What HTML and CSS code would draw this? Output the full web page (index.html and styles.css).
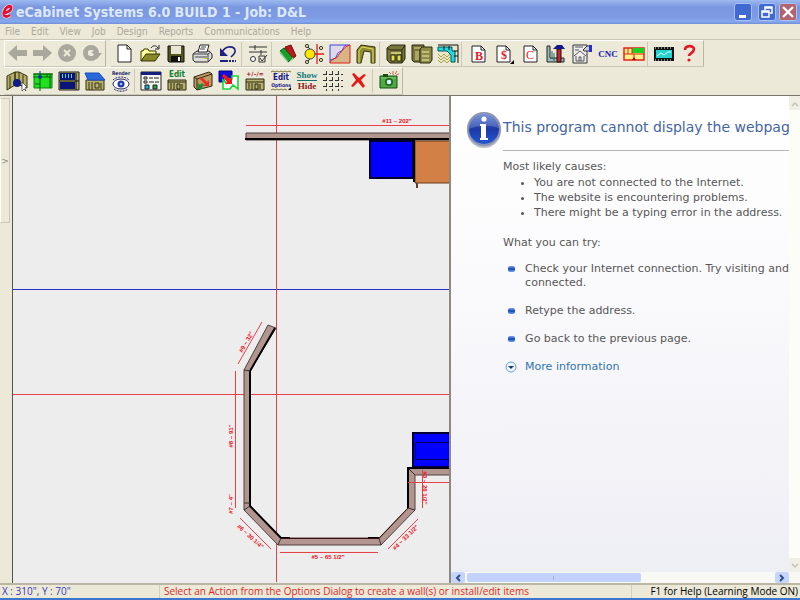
FILE: index.html
```
<!DOCTYPE html>
<html lang="en">
<head>
    <meta charset="utf-8">
    <title>eCabinet Systems 6.0 BUILD 1 - Job: D&amp;L</title>
    <link rel="stylesheet" href="styles.css">
</head>
<body>
<header class="titlebar">
    <svg class="logo" width="16" height="18" viewBox="0 0 16 18"><path d="M3 10C8 10 12 7 11 4C10 2 5 4 4 9C3 13 6 15 10 12" fill="none" stroke="#f4e4f0" stroke-width="4"/><path d="M3 10C8 10 12 7 11 4C10 2 5 4 4 9C3 13 6 15 10 12" fill="none" stroke="#e01030" stroke-width="2.800"/></svg>
    <h1 class="title">eCabinet Systems 6.0 BUILD 1 - Job: D&amp;L</h1>
    <div class="window-buttons">
        <button class="win" aria-label="Minimize"><svg width="16" height="16"><path d="M4 11h7v3H4z" fill="#fff"/></svg></button>
        <button class="win" aria-label="Restore"><svg width="16" height="16"><path d="M6 6V3h7v6h-2M6 4h7M3 7h7v6H3zM3 8h7" fill="none" stroke="#fff" stroke-width="1.500"/></svg></button>
        <button class="win close" aria-label="Close"><svg width="16" height="16"><path d="M3 3l10 10M13 3L3 13" stroke="#fff" stroke-width="2.400"/></svg></button>
    </div>
</header>

<nav class="menu">
    <button>File</button>
    <button>Edit</button>
    <button>View</button>
    <button>Job</button>
    <button>Design</button>
    <button>Reports</button>
    <button>Communications</button>
    <button>Help</button>
</nav>

<div class="toolbar">
    <div class="band nav-band">
        <button class="tool" aria-label="Back"><svg viewBox="0 0 22 22"><path d="M1 10L10 2v5h10v6H10v5z" fill="#aaa89c"/></svg></button>
        <button class="tool" aria-label="Forward"><svg viewBox="0 0 22 22"><path d="M20 10L11 2v5H1v6h10v5z" fill="#aaa89c"/></svg></button>
        <button class="tool" aria-label="Stop"><svg viewBox="0 0 22 22"><circle cx="10" cy="10" r="9" fill="#aaa89c"/><path d="M7 7l6 6M13 7l-6 6" stroke="#eeeadb" stroke-width="2"/></svg></button>
        <button class="tool" aria-label="Refresh"><svg viewBox="0 0 22 22"><circle cx="9" cy="10" r="5.500" fill="none" stroke="#aaa89c" stroke-width="5"/><path d="M10 10h10l-5 6z" fill="#aaa89c"/><circle cx="9" cy="10" r="3" fill="#eeeadb"/><path d="M9 9l4-1v4z" fill="#aaa89c"/></svg></button>
    </div>
    <div class="band">
        <button class="tool" aria-label="New"><svg viewBox="0 0 22 22"><path d="M5 2h9l4 4v13H5z" fill="#fff" stroke="#222"/><path d="M14 2v4h4" fill="none" stroke="#222"/></svg></button>
        <button class="tool" aria-label="Open"><svg viewBox="0 0 22 22"><path d="M2 18V8h2l1-2h4l1 2h7v3" fill="#ffff9c" stroke="#333300"/><path d="M2 18l5-7h14l-5 7z" fill="#88882a" stroke="#333300"/><path d="M12 5c2-3 5-3 7 0M20 2v4h-4" fill="none" stroke="#222"/></svg></button>
        <button class="tool" aria-label="Save"><svg viewBox="0 0 22 22"><path d="M3 3h16v16H4l-1-1z" fill="#55551c" stroke="#111"/><path d="M6 3h10v8H6z" fill="#e9e6d8"/><path d="M6 13h10v6H6z" fill="#111"/><path d="M13 14h2v4h-2z" fill="#fff"/></svg></button>
        <button class="tool" aria-label="Print"><svg viewBox="0 0 22 22"><path d="M2 11l4-3h12l3 3v4l-4 4H4l-2-2z" fill="#ddd" stroke="#222"/><path d="M7 9l2-7h9l-2 7z" fill="#fff" stroke="#222"/><path d="M10 4h5M9 6h5M2 11h15l3-2M17 11v7M4 14h12" fill="none" stroke="#444"/><path d="M13 15h3v1h-3z" fill="#dd0"/></svg></button>
        <button class="tool" aria-label="Undo"><svg viewBox="0 0 22 22"><path d="M5 9c4-7 12-6 13-2c1 3-2 5-4 7" fill="none" stroke="#202080" stroke-width="1.600"/><path d="M3 5v8h8z" fill="#202080"/><path d="M3 18h8" stroke="#202080" stroke-width="2"/><path d="M12 18h7" stroke="#202080" stroke-width="2" stroke-dasharray="2 1"/></svg></button>
        <span class="sep"></span>
        <button class="tool" aria-label="Settings"><svg viewBox="0 0 22 22"><path d="M2 4h18M2 9h18M8 2v5M14 7v5" stroke="#333" fill="none"/><circle cx="6" cy="16" r="2.500" fill="#fff" stroke="#333"/><path d="M12 13h6v6h-6zM13 15l2 3 5-6" fill="none" stroke="#333"/></svg></button>
        <span class="sep"></span>
        <button class="tool" aria-label="Materials"><svg viewBox="0 0 22 22"><path d="M8 4l6-2 5 11-5 4z" fill="#c01818" stroke="#611"/><path d="M3 8l4-3 9 10-5 4z" fill="#18a028" stroke="#052"/><path d="M3 8v3l8 9v-2zM11 20l5-4v-2z" fill="#8fd08f"/></svg></button>
        <button class="tool" aria-label="Hardware"><svg viewBox="0 0 22 22"><path d="M3 11h18M14 1v20" stroke="#e02020" stroke-width="1.300"/><circle cx="7" cy="11" r="5" fill="#ffe600" stroke="#444"/><g fill="#eee8a0" stroke="#333"><circle cx="4" cy="3" r="1.600"/><circle cx="4" cy="19" r="1.600"/><circle cx="18" cy="5" r="1.600"/><circle cx="18" cy="17" r="1.600"/></g><path d="M5 4l2 2M5 18l2-2" stroke="#333"/></svg></button>
        <button class="tool" aria-label="Profiles"><svg viewBox="0 0 22 22"><path d="M1 2h20v18H1z" fill="#ddd9e8"/><path d="M1 20c1-5 3-4 6-5c3-1 2-4 5-6c2-1 2-5 9-7v18z" fill="#d9b585"/><path d="M1 20V2h20M1 17c4 0 6-2 7-5c1-4 5-3 6-6c1-2 1-3 3-4" fill="none" stroke="#4444dd"/><path d="M21 2v18H1c1-4 3-4 6-5c3-1 2-4 5-6c2-1 2-5 9-7" fill="none" stroke="#e02020"/></svg></button>
        <button class="tool" aria-label="Door"><svg viewBox="0 0 22 22"><path d="M2 20V7l4-5 14 2v16h-4V9L9 8 6 20z" fill="#8f8b32" stroke="#333310"/><path d="M4 20V8l3-4 11 2v14" fill="none" stroke="#e0dc60"/></svg></button>
        <span class="sep"></span>
        <button class="tool" aria-label="Cabinet"><svg viewBox="0 0 22 22"><path d="M2 5l4-3h14v14l-3 4H5l-3-3z" fill="#77743c" stroke="#292910"/><path d="M2 5l3 2h12v13M17 7l3-5" fill="none" stroke="#292910"/><path d="M6 9h10v2H6z" fill="#c9c673"/><path d="M6 12h4v6H6zM12 12h4v6h-4z" fill="#dfe04b" stroke="#292910"/></svg></button>
        <button class="tool" aria-label="Cabinets"><svg viewBox="0 0 22 22"><path d="M1 2h12v17H3l-2-2z" fill="#77743c" stroke="#292910"/><path d="M3 4h7v2H3zM4 8h4v9H4z" fill="#aaa765"/><path d="M9 6l2-2h10v13l-2 3H9z" fill="#8d8a45" stroke="#292910"/><path d="M11 8h7v2h-7zM11 12h7v2h-7zM11 16h7v2h-7z" fill="#c0bd7c"/></svg></button>
        <button class="tool" aria-label="Room plan"><svg viewBox="0 0 22 22"><path d="M1 2h20v18H1z" fill="#e9e6cb"/><path d="M1 11l3 3 3-3 3 3 3-3M1 17l3 3 3-3 3 3 3-3M1 14l3 3 3-3 3 3 3-3" fill="none" stroke="#aaa740"/><path d="M1 4h14v4h3v11h-4v-7l-4-4H1z" fill="#25d9e0" stroke="#055"/><path d="M21 2v18M1 2h20M17 8h4M17 13h4M7 3v4M12 3v4" stroke="#111"/></svg></button>
        <span class="sep"></span>
        <button class="tool" aria-label="Bid report"><svg viewBox="0 0 22 22"><path d="M5 3h9l4 4v12H5z" fill="#fff" stroke="#222"/><path d="M14 3v4h4" fill="none" stroke="#222"/><text class="page-letter" x="12" y="17">B</text></svg></button>
        <button class="tool" aria-label="Price report"><svg viewBox="0 0 22 22"><path d="M4 3h9l4 4v12H4z" fill="#fff" stroke="#222"/><path d="M13 3v4h4" fill="none" stroke="#222"/><text class="page-letter" x="11" y="16">$</text><path d="M21 17v4h-4z"/></svg></button>
        <button class="tool" aria-label="Cut report"><svg viewBox="0 0 22 22"><path d="M5 3h9l4 4v12H5z" fill="#fff" stroke="#222"/><path d="M14 3v4h4" fill="none" stroke="#222"/><text class="page-letter plain" x="11" y="16">C</text></svg></button>
        <button class="tool" aria-label="Assembly"><svg viewBox="0 0 22 22"><path d="M2 3h3v12h14v4H2z" fill="#9dbdb8" stroke="#222"/><path d="M7 16V8M9 10v8" stroke="#176b65"/><path d="M12 6h4v13h-4z" fill="#b72c35" stroke="#300"/><path d="M8 6l4-4h5l3 4z" fill="#16178c"/></svg></button>
        <button class="tool" aria-label="Drawing sheet"><svg viewBox="0 0 22 22"><path d="M2 2h14v18H2z" fill="#eee" stroke="#333"/><path d="M4 4h8M4 7h4M3 13l6-5 6 5M5 13v5h8v-5M8 18v-4h2v4" fill="none" stroke="#555"/><path d="M12 7l4-4h3v5h-6z" fill="#ccc" stroke="#333"/><path d="M18 2h3v7h-3z" fill="#2230d0"/></svg></button>
        <button class="tool" aria-label="CNC"><svg viewBox="0 0 22 22"><text class="cnc" x="11" y="14">CNC</text></svg></button>
        <button class="tool" aria-label="Nesting"><svg viewBox="0 0 22 22"><path d="M1 5h20v12H1z" fill="#fff28a" stroke="#e02010" stroke-width="1.400"/><path d="M9 5h12v5H9z" fill="#20d020"/><path d="M9 5v6M5 5v6M1 11h20M11 11v6" stroke="#e02010"/><path d="M9 17l2-3 2 3z" fill="#a00"/></svg></button>
        <span class="sep"></span>
        <button class="tool" aria-label="Video"><svg viewBox="0 0 22 22"><path d="M1 4h20v14H1z" fill="#111"/><path d="M3 7h16v8H3z" fill="#22d5cf"/><path d="M2 5h18M2 17h18" stroke="#fff" stroke-dasharray="1 2"/><path d="M4 13l4-3 3 2 4-3h3" fill="none" stroke="#e6ffff"/></svg></button>
        <button class="tool" aria-label="Help"><svg viewBox="0 0 22 22"><path d="M6 7c0-5 9-5 9-1c0 4-5 4-5 7" fill="none" stroke="#e01828" stroke-width="2.600"/><circle cx="10" cy="17" r="1.600" fill="#e01828"/></svg></button>
    </div>
</div>

<div class="toolbar second">
    <div class="band">
        <button class="tool" aria-label="Room"><svg viewBox="0 0 22 22"><path d="M1 6l8-4v13l-8 5zM9 2h4l8 4v12l-8-3H9z" fill="#b7ae6b" stroke="#333310"/><path d="M4 6v12M13 2v13M17 5v10" stroke="#333310"/><circle cx="11" cy="13" r="4" fill="#111c88"/><path d="M16 12l5 5-2 1 1 3-2-2-2 2z" fill="#fff" stroke="#222" stroke-width=".6"/></svg></button>
        <button class="tool" aria-label="Plan view"><svg viewBox="0 0 22 22"><path d="M2 4h18v14H2z" fill="#20e020" stroke="#118011"/><path d="M1 4h20M1 7h19M8 8v13M15 4v3M18 4v14M3 14h5" stroke="#086008" fill="none"/><circle cx="8" cy="7" r="2" fill="#0b35a0"/><path d="M8 1v6" stroke="#0b35a0"/></svg></button>
        <button class="tool" aria-label="Elevation"><svg viewBox="0 0 22 22"><path d="M1 2h20v18H1z" fill="#b3ab62" stroke="#222"/><path d="M2 3h15v7H2zM2 12h15v7H2z" fill="#091675"/><path d="M4 4h1v4H4zM7 4h1v4H7zM10 4h1v4h-1zM13 4h1v4h-1z" fill="#55cfd0"/><path d="M1 11h20M18 3v17" stroke="#111"/></svg></button>
        <button class="tool" aria-label="Roof"><svg viewBox="0 0 22 22"><path d="M2 10h18v10H2z" fill="#b7b071" stroke="#333310"/><path d="M1 3h14l6 7H4z" fill="#2a6ad8" stroke="#164fc5"/><path d="M5 12v8M8 12v8M11 13h4v5h-4zM17 13v6" fill="none" stroke="#333310"/></svg></button>
        <button class="tool" aria-label="Render"><svg viewBox="0 0 22 22"><text class="render-label" x="11" y="5">Render</text><ellipse cx="11" cy="14" rx="8" ry="5" fill="#fff" stroke="#28286e"/><circle cx="11" cy="14" r="3.500" fill="#2737a7"/><circle cx="11" cy="14" r="1.300" fill="#8cf"/><path d="M3 10c4-4 12-4 16 0M4 19c4 3 10 3 14 0" fill="none" stroke="#28286e" stroke-dasharray="2 1"/></svg></button>
        <span class="sep"></span>
        <button class="tool" aria-label="Options dialog"><svg viewBox="0 0 22 22"><path d="M1 2h20v18H1z" fill="#f4f4ee" stroke="#222"/><path d="M1 2h20v3H1z" fill="#16207c"/><path d="M4 7h3v2H4zM4 11h3v2H4z" fill="none" stroke="#222"/><path d="M9 8h4M14 8h5M9 12h5M15 12h4" stroke="#222"/><path d="M5 15h4v4H5z" fill="#18aadc" stroke="#222"/><path d="M13 15h4v4h-4z" fill="#22a044" stroke="#222"/></svg></button>
        <button class="tool" aria-label="Edit cabinet"><svg viewBox="0 0 22 22"><text class="icon-label green" x="11" y="7">Edit</text><path d="M2 10h18v10H2z" fill="#b7b071" stroke="#292910"/><path d="M2 12h18M5 13v6M8 13v7M11 14h3v5h-3zM16 14v5" fill="none" stroke="#292910"/></svg></button>
        <button class="tool" aria-label="Move cabinet"><svg viewBox="0 0 22 22"><path d="M2 7l15-5 3 2v12L5 20l-3-3z" fill="#c09a62" stroke="#292910"/><path d="M2 7l3 2v11M5 9l15-5" fill="none" stroke="#292910"/><path d="M6 19v-6l2 2 2-2 2 2-2 2 2 2z" fill="#158b35"/><path d="M10 7l5 5 2-2v6h-6l2-2-5-5z" fill="#e43020"/></svg></button>
        <button class="tool" aria-label="Swap"><svg viewBox="0 0 22 22"><path d="M1 1h13v11H1z" fill="#1010d8" stroke="#000080"/><path d="M6 9h8v-3h6v13l-5-4-3 4H5V10l4 4" fill="#fff" stroke="#18d838" stroke-width="1.600"/><path d="M6 4l6 5 2-2v7H7l2-2-5-6z" fill="#f01818"/></svg></button>
        <button class="tool" aria-label="Add or remove"><svg viewBox="0 0 22 22"><text class="plus-label" x="11" y="6">+/–/=</text><path d="M2 9h18v11H2z" fill="#b7b071" stroke="#292910"/><path d="M2 12h18M5 13v6M8 13v7M11 14h3v5h-3zM16 14v5" fill="none" stroke="#292910"/></svg></button>
        <button class="tool" aria-label="Edit options"><svg viewBox="0 0 22 22"><path d="M1 2l2-1 2 1 2-1 2 1 2-1 2 1 2-1 2 1 2-1 2 1M1 20l2-1 2 1 2-1 2 1 2-1 2 1 2-1 2 1" fill="none" stroke="#77743c"/><text class="icon-label blue" x="11" y="10">Edit</text><text class="small-label blue" x="11" y="17">Options</text><path d="M21 17v3h-3z"/></svg></button>
        <button class="tool" aria-label="Show or hide"><svg viewBox="0 0 22 22"><text class="serif-label teal" x="11" y="8">Show</text><path d="M1 10.500h20" stroke="#167070"/><text class="serif-label maroon" x="11" y="19">Hide</text></svg></button>
        <button class="tool" aria-label="Grid"><svg viewBox="0 0 22 22"><path d="M1 4.500h20M1 10.500h20M1 16.500h20M4.500 1v20M10.500 1v20M16.500 1v20" stroke="#333" stroke-dasharray="4 2" fill="none"/></svg></button>
        <button class="tool" aria-label="Delete"><svg viewBox="0 0 22 22"><path d="M4 4l2-1 5 5 5-4 2 1-5 5 4 6-2 2-5-6-5 5-2-1 5-6z" fill="#e41818"/></svg></button>
        <span class="sep"></span>
        <button class="tool" aria-label="Snapshot"><svg viewBox="0 0 22 22"><path d="M2 6h17v12H2z" fill="#4fa946" stroke="#14500f"/><path d="M5 4h5v3H5z" fill="#14500f"/><path d="M3 8h15" stroke="#8cc878"/><circle cx="11" cy="12" r="4" fill="#246820"/><circle cx="11" cy="12" r="2.300" fill="#d4ffff"/><path d="M15 5V1M13 4l-2-2M17 4l2-3M18 5l3-1" stroke="#d06a45"/></svg></button>
    </div>
</div>

<main class="workspace">
    <aside class="drawer"><button class="drawer-handle" aria-label="Open drawer">&gt;</button></aside>

    <section class="plan">
        <svg class="drawing">
            <!-- drawing units are window pixels, the group moves them to the pane corner -->
            <g transform="translate(-13 -96)">
                <path class="axis blue-line" d="M13 289.500H2000"/>
                <path class="axis" d="M276.500 96V582M13 394.500H2000"/>

                <!-- back wall with cabinets -->
                <path d="M246 133H2000V140H246z" class="wall"/>
                <path d="M245 139H2000" class="edge"/>
                <path d="M370 141H413V178H370z" class="cabinet"/>
                <path d="M415 141H480V183H415z" fill="#d28045" stroke="#6b3a1b"/>
                <path d="M414 140V182" class="edge"/>
                <path d="M417 183v5" stroke="#6b3a1b" stroke-width="2"/>

                <!-- bay -->
                <path class="wall" d="M268 325L244 370V510L278 545H381L415 510V475H2000V468H408V508L379 538H281L250 506V371L276 328z"/>
                <path class="edge" d="M275 328L250 371V506L281 538H290M368 538H379"/>
                <path class="edge" d="M408 508V468H2000"/>
                <path d="M281 538.500H379L408 508" fill="none" stroke="#3a1010"/>
                <path d="M244 370l6 1M244 503h6M244 510l6-4M278 545l3-7M381 545l-2-7M415 510l-7-2M415 475l-6-6" stroke="#333" fill="none"/>
                <path class="cabinet" d="M413 433H480V467H413z"/>
                <path d="M480 442.500H415.500V459.500H480" fill="none" stroke="#000058"/>

                <!-- dimensions -->
                <path class="axis" d="M246 125.500H2000M262 322L238 364M235.500 371V508M240 518L271 549M280 552.500H378M388 549L418 519M422.500 470V508M408 482.500H2000"/>
                <g class="dims">
                    <text x="397" y="123">#11 ~ 202"</text>
                    <text x="328" y="559">#5 ~ 65 1/2"</text>
                    <text transform="translate(248 343) rotate(-60)">#9 ~ 32"</text>
                    <text transform="translate(233 436) rotate(-90)">#8 ~ 91"</text>
                    <text transform="translate(233 504) rotate(-90)">#7 ~ 4"</text>
                    <text transform="translate(249 538) rotate(42)">#6 ~ 30 1/4"</text>
                    <text transform="translate(407 539) rotate(-44)">#4 ~ 33 1/2"</text>
                    <text transform="translate(423 488) rotate(90)">#3 ~ 26 1/2"</text>
                </g>
            </g>
        </svg>
    </section>

    <section class="browser">
        <div class="page">
            <svg class="info" width="36" height="38" viewBox="0 0 36 38">
                <defs>
                    <linearGradient id="ball" x1="0" y1="0" x2="0" y2="1"><stop offset="0" stop-color="#5a78cc"/><stop offset=".5" stop-color="#1c39a8"/><stop offset="1" stop-color="#2456d0"/></linearGradient>
                </defs>
                <circle cx="17" cy="20" r="17" fill="#b9bcc8"/>
                <circle cx="17" cy="18" r="17" fill="#8a92b0"/>
                <circle cx="17" cy="18" r="15" fill="url(#ball)"/>
                <path d="M2 18a15 15 0 0 1 30-1c-9-3-20-3-30 1z" fill="#fff" opacity=".18"/>
                <circle cx="17" cy="8" r="2.600" fill="#fff"/>
                <path d="M13 13h6v14h2v2h-8v-2h1V15h-1z" fill="#fff"/>
            </svg>
            <div class="message">
                <h2>This program cannot display the webpage</h2>
                <p>Most likely causes:</p>
                <ul class="causes">
                    <li>You are not connected to the Internet.</li>
                    <li>The website is encountering problems.</li>
                    <li>There might be a typing error in the address.</li>
                </ul>
                <p>What you can try:</p>
                <ul class="tries">
                    <li>Check your Internet connection. Try visiting and<br>connected.</li>
                    <li>Retype the address.</li>
                    <li>Go back to the previous page.</li>
                </ul>
                <a class="more" href="#more"><svg width="12" height="12"><circle cx="6" cy="6" r="5" fill="#eef6ff" stroke="#6c9fc8"/><path d="M3 5h6L6 8z" fill="#123a70"/></svg>More information</a>
            </div>
        </div>
        <div class="vscroll">
            <button aria-label="Scroll up"><svg width="8" height="6"><path d="M1 5l3-3 3 3" fill="none" stroke="#c5c4b8" stroke-width="1.500"/></svg></button>
            <button aria-label="Scroll down"><svg width="8" height="6"><path d="M1 1l3 3 3-3" fill="none" stroke="#c5c4b8" stroke-width="1.500"/></svg></button>
        </div>
        <div class="hscroll">
            <button aria-label="Scroll left"><svg width="6" height="8"><path d="M5 1L2 4l3 3" fill="none" stroke="#334f88" stroke-width="2"/></svg></button>
            <div class="track"><div class="thumb"></div></div>
            <button aria-label="Scroll right"><svg width="6" height="8"><path d="M1 1l3 3-3 3" fill="none" stroke="#334f88" stroke-width="2"/></svg></button>
        </div>
    </section>
</main>

<footer class="status">
    <span class="coords">X : 310", Y : 70"</span>
    <span class="hint">Select an Action from the Options Dialog to create a wall(s) or install/edit items</span>
    <span class="help">F1 for Help (Learning Mode ON)</span>
</footer>
</body>
</html>
```
FILE: styles.css
```
* {
    box-sizing: border-box;
}

body {
    display: flex;
    flex-direction: column;
    height: 100vh;
    margin: 0;
    overflow: hidden;
    background-color: #ece9d8;
    font-family: "DejaVu Sans", sans-serif;
    font-size: 11px;
}

button {
    margin: 0;
    padding: 0;
    border: 0;
    background: none;
    font-family: inherit;
}

h1, h2, p, ul {
    margin: 0;
    padding: 0;
}

/* title bar */

.titlebar {
    display: flex;
    align-items: center;
    flex: none;
    height: 24px;
    background: linear-gradient(#9db9f0, #7a97e0 30%, #7d9ae2 70%, #86a8ee 90%, #6f8ed8);
}

.logo {
    flex: none;
}

.title {
    flex: 1;
    color: #dde8fb;
    font-family: "DejaVu Sans Condensed", "DejaVu Sans", sans-serif;
    font-size: 14px;
    font-weight: bold;
    line-height: 24px;
    white-space: nowrap;
}

.window-buttons {
    display: flex;
    gap: 3px;
    padding-right: 3px;
}

.win {
    width: 18px;
    height: 18px;
    border: 1px solid #a9c0f2;
    border-radius: 3px;
    background-color: #4169d2;
}

.win:first-child {
    margin-right: 3px;
}

.win svg {
    display: block;
}

.close {
    background-color: #b4636c;
}

/* menu */

.menu {
    display: flex;
    flex: none;
    gap: 11px;
    height: 15px;
    padding-left: 5px;
    font-family: "DejaVu Sans Condensed", "DejaVu Sans", sans-serif;
}

.menu button {
    color: #aca899;
    font-size: 10px;
    line-height: 14px;
}

/* toolbars */

.toolbar {
    display: flex;
    flex: none;
    gap: 5px;
    height: 28px;
    padding-left: 4px;
    border-top: 1px solid #c9c6b5;
}

.second {
    border-top: 0;
}

.band {
    display: flex;
    align-items: center;
    border-top: 1px solid #fff;
    border-right: 1px solid #bab7a6;
    border-bottom: 1px solid #c9c6b5;
}

.nav-band {
    border-left: 1px solid #fff;
}

.nav-band .tool {
    width: 25px;
}

.tool {
    flex: none;
    width: 26px;
    height: 24px;
}

.tool svg {
    display: block;
    width: 22px;
    height: 22px;
    margin: 0 auto;
    overflow: visible;
}

.sep {
    width: 4px;
    height: 24px;
    border-left: 1px solid #cbc8b8;
}

.tool text {
    font-weight: bold;
    text-anchor: middle;
}

.page-letter {
    fill: #e01828;
    font-family: "Liberation Serif", serif;
    font-size: 12px;
}

.tool .plain {
    font-weight: normal;
}

.cnc {
    fill: #2020b0;
    font-family: "Liberation Serif", serif;
    font-size: 9px;
}

.render-label {
    fill: #28286e;
    font-family: "DejaVu Sans Condensed", sans-serif;
    font-size: 5px;
}

.icon-label {
    font-family: "DejaVu Sans Condensed", sans-serif;
    font-size: 8px;
}

.small-label {
    font-family: "DejaVu Sans Condensed", sans-serif;
    font-size: 5px;
}

.serif-label {
    font-family: "Liberation Serif", serif;
    font-size: 9px;
}

.plus-label {
    fill: #a02020;
    font-size: 6px;
}

.green {
    fill: #108030;
}

.blue {
    fill: #18188c;
}

.teal {
    fill: #107878;
}

.maroon {
    fill: #901818;
}

/* workspace */

.workspace {
    display: flex;
    flex: 1;
    min-height: 0;
    border-top: 1px solid #77746a;
}

.drawer {
    flex: none;
    width: 12px;
    padding-top: 2px;
}

.drawer-handle {
    width: 10px;
    height: 125px;
    border: 1px solid #c9c6b5;
    border-left-color: #fff;
    color: #8d8a7c;
    font-size: 9px;
}

.plan {
    flex: 5;
    min-width: 0;
    border-left: 1px solid #55534b;
    background-color: #ededed;
}

.drawing {
    display: block;
    width: 100%;
    height: 100%;
}

.axis {
    fill: none;
    stroke: #e84048;
}

.blue-line {
    stroke: #2830c8;
}

.wall {
    fill: #b3958f;
    stroke: #50403c;
}

.edge {
    fill: none;
    stroke: #000;
    stroke-width: 2;
}

.cabinet {
    fill: #0000ff;
    stroke: #000030;
    stroke-width: 2;
}

.dims {
    fill: #e81020;
    font-family: "Liberation Sans", sans-serif;
    font-size: 6px;
    font-weight: bold;
    text-anchor: middle;
}

/* browser pane */

.browser {
    display: grid;
    flex: 4;
    grid-template-columns: 1fr 11px;
    grid-template-rows: 1fr 11px;
    min-width: 0;
    border-left: 2px solid #8d8a7c;
    background-color: #f8f8f2;
}

.page {
    display: flex;
    align-items: flex-start;
    min-width: 0;
    padding: 15px 0 0 16px;
    overflow: hidden;
    background: linear-gradient(#fff, #fafafc 40%, #eeeef5);
    color: #575757;
    white-space: nowrap;
}

.info {
    flex: none;
}

.message {
    flex: 1;
    min-width: 0;
}

.message h2 {
    height: 40px;
    margin-bottom: 8px;
    border-bottom: 1px solid #b4b4b8;
    color: #4465a2;
    font-size: 14px;
    font-weight: normal;
    line-height: 32px;
}

.message p {
    line-height: 16px;
}

.causes {
    margin-bottom: 15px;
    padding-left: 31px;
    line-height: 15px;
}

.tries {
    padding: 11px 0 0 22px;
    line-height: 14px;
    list-style: none;
}

.tries li {
    margin-bottom: 14px;
}

.tries li::before {
    float: left;
    width: 7px;
    height: 6px;
    margin: 4px 0 0 -17px;
    border-radius: 2px;
    background: linear-gradient(#7ca4ee, #1747b8 50%, #6ba8f2);
    content: "";
}

.more {
    display: flex;
    align-items: center;
    gap: 8px;
    padding-left: 2px;
    color: #2f74b0;
    line-height: 14px;
    text-decoration: none;
}

.vscroll {
    display: flex;
    flex-direction: column;
    justify-content: space-between;
    background-color: #fdfdf8;
}

.vscroll button {
    height: 14px;
    background-color: #f0efe6;
    line-height: 6px;
}

.hscroll {
    display: flex;
    background-color: #f8f8f4;
}

.hscroll button {
    width: 14px;
    border-radius: 2px;
    background-color: #c6d5fb;
    line-height: 8px;
}

.track {
    flex: 1;
    padding: 1px 2px;
}

.thumb {
    width: 57%;
    height: 9px;
    border-radius: 2px;
    background: linear-gradient(90deg, #9fb5ec 1px, transparent 1px) center / 3px 4px no-repeat, #c3d2fb;
}

/* status bar */

.status {
    display: flex;
    flex: none;
    height: 17px;
    border-top: 2px solid #b9b6a4;
    border-bottom: 2px solid #3d75cf;
    font-family: "Open Sans", sans-serif;
    font-size: 10px;
    line-height: 13px;
    white-space: nowrap;
}

.coords {
    width: 20%;
    padding-left: 2px;
    border-right: 1px solid #d3d0c0;
    color: #3838c0;
}

.hint {
    flex: 1;
    padding-left: 4px;
    color: #e02828;
}

.help {
    padding: 0 2px 0 18px;
    border-left: 1px solid #d3d0c0;
}
```
